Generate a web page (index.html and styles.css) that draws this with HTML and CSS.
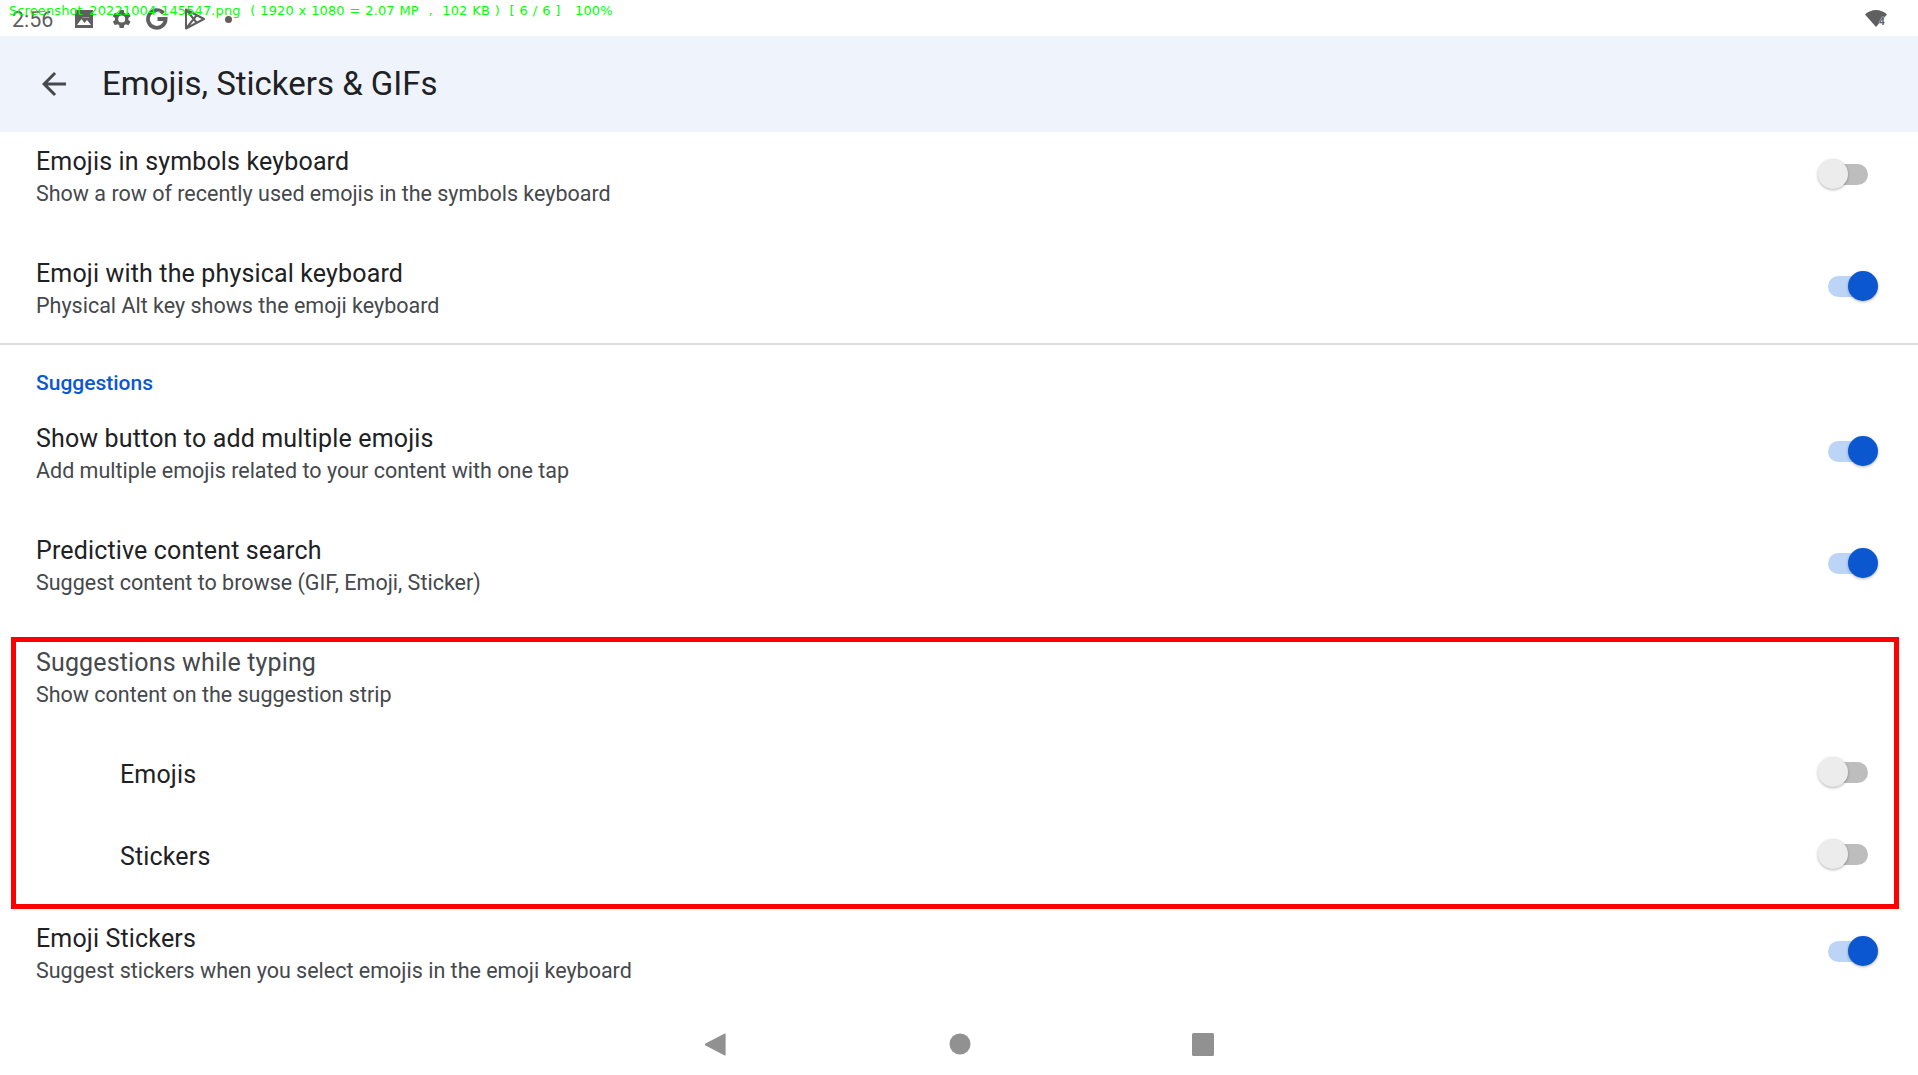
FILE: index.html
```html
<!DOCTYPE html>
<html lang="en">
<head>
<meta charset="utf-8">
<title>Emojis, Stickers &amp; GIFs</title>
<link rel="stylesheet" href="styles.css">
</head>
<body>
<div class="screen">
  <div class="viewer-caption">Screenshot_20221004-145547.png &nbsp;( 1920 x 1080 = 2.07 MP &nbsp;, &nbsp;102 KB ) &nbsp;[ 6 / 6 ] &nbsp; 100%</div>
  <header class="status-bar">
    <span class="clock">2:56</span>
    <div class="status-icons">
      <svg class="status-icon" viewBox="0 0 24 24"><path d="M3 3h18v18H3z" fill="#5f5f5f"/><path d="M5 18l4.500-6 3 4 2.500-3 4 5z" fill="#fff"/></svg>
      <svg class="status-icon" viewBox="0 0 24 24"><path fill="#5f5f5f" d="M19.400 13a7.500 7.500 0 0 0 0-2l2.200-1.700-2.100-3.600-2.600 1a7.700 7.700 0 0 0-1.700-1L14.800 3h-4.200l-.4 2.700a7.700 7.700 0 0 0-1.700 1l-2.600-1-2.100 3.600L6 11a7.500 7.500 0 0 0 0 2l-2.200 1.700 2.100 3.600 2.600-1a7.700 7.700 0 0 0 1.700 1l.4 2.700h4.200l.4-2.700a7.700 7.700 0 0 0 1.700-1l2.600 1 2.100-3.600zM12.700 15.500a3.500 3.500 0 1 1 0-7 3.500 3.500 0 0 1 0 7z"/></svg>
      <svg class="status-icon" viewBox="0 0 24 24"><path fill="none" stroke="#5f5f5f" stroke-width="3.800" d="M18.500 6.300A8.800 8.800 0 1 0 20.600 12H12.500"/></svg>
      <svg class="status-icon" viewBox="0 0 24 24"><path fill="none" stroke="#5f5f5f" stroke-width="2" stroke-linejoin="round" d="M4 2.500v19L22 12zM4 2.500l10.500 13M4 21.500l10.500-13"/></svg>
      <span class="status-dot"></span>
    </div>
    <svg class="wifi" viewBox="0 0 24 20"><path fill="#5f5f5f" d="M1 6.500C4 3.500 8 2 12 2s8 1.500 11 4.500L12 19z"/><text x="15" y="17" class="wifi-level">4</text></svg>
  </header>

  <div class="app-bar">
    <svg class="back" viewBox="0 0 24 24"><path fill="#45484c" d="M20 11H7.800l5.600-5.600L12 4l-8 8 8 8 1.400-1.400L7.800 13H20z"/></svg>
    <h1 class="app-title">Emojis, Stickers &amp; GIFs</h1>
  </div>

  <main class="list">
    <div class="row">
      <div class="row-text"><div class="row-title">Emojis in symbols keyboard</div><div class="row-sub">Show a row of recently used emojis in the symbols keyboard</div></div>
      <span class="toggle"><span class="track"></span><span class="thumb"></span></span>
    </div>
    <div class="row">
      <div class="row-text"><div class="row-title">Emoji with the physical keyboard</div><div class="row-sub">Physical Alt key shows the emoji keyboard</div></div>
      <span class="toggle on"><span class="track"></span><span class="thumb"></span></span>
    </div>
    <div class="category">Suggestions</div>
    <div class="row">
      <div class="row-text"><div class="row-title">Show button to add multiple emojis</div><div class="row-sub">Add multiple emojis related to your content with one tap</div></div>
      <span class="toggle on"><span class="track"></span><span class="thumb"></span></span>
    </div>
    <div class="row">
      <div class="row-text"><div class="row-title">Predictive content search</div><div class="row-sub">Suggest content to browse (GIF, Emoji, Sticker)</div></div>
      <span class="toggle on"><span class="track"></span><span class="thumb"></span></span>
    </div>
    <div class="row">
      <div class="row-text"><div class="row-title muted">Suggestions while typing</div><div class="row-sub">Show content on the suggestion strip</div></div>
    </div>
    <div class="row sub-row">
      <div class="row-title sub-label">Emojis</div>
      <span class="toggle"><span class="track"></span><span class="thumb"></span></span>
    </div>
    <div class="row sub-row">
      <div class="row-title sub-label">Stickers</div>
      <span class="toggle"><span class="track"></span><span class="thumb"></span></span>
    </div>
    <div class="row">
      <div class="row-text"><div class="row-title">Emoji Stickers</div><div class="row-sub">Suggest stickers when you select emojis in the emoji keyboard</div></div>
      <span class="toggle on"><span class="track"></span><span class="thumb"></span></span>
    </div>
    <div class="highlight"></div>
  </main>

  <nav class="nav-bar">
    <svg class="nav-icon" viewBox="0 0 24 24"><path fill="#919191" stroke="#919191" stroke-width="1.200" stroke-linejoin="round" d="M20 2v21L0 12.500z"/></svg>
    <svg class="nav-icon" viewBox="0 0 24 24"><circle cx="12" cy="12" r="10.500" fill="#919191"/></svg>
    <svg class="nav-icon" viewBox="0 0 24 24"><rect x="1" y="1" width="22" height="23" rx="1.500" fill="#919191"/></svg>
  </nav>
</div>
</body>
</html>
```

FILE: styles.css
```css
* { box-sizing: border-box; }
html, body { margin: 0; padding: 0; }
body { background: #fff; font-family: Roboto, "Liberation Sans", sans-serif; overflow: hidden; }
.screen { position: relative; width: 1918px; height: 1075px; display: flex; flex-direction: column; overflow: hidden; background: #fff; }

.viewer-caption { position: absolute; left: 9px; top: 3px; z-index: 5; color: #00ff00; font: 13px/15px "DejaVu Sans", sans-serif; letter-spacing: .1px; word-spacing: .6px; white-space: nowrap; }

.status-bar { height: 36px; flex: none; display: flex; align-items: center; padding: 0 30px 0 12px; color: #5f5f5f; }
.clock { font-size: 21.500px; margin-top: 2px; width: 60px; }
.status-icons { display: flex; align-items: center; gap: 12.500px; margin-top: 1px; }
.status-icon { width: 24px; height: 24px; }
.status-dot { width: 7px; height: 7px; border-radius: 50%; background: #5f5f5f; margin: 2px 0 0 7px; }
.wifi { width: 24px; height: 20px; margin-left: auto; }
.wifi-level { font: bold 10px Roboto, sans-serif; fill: #5f5f5f; stroke: #fff; stroke-width: .6px; paint-order: stroke; }

.app-bar { height: 96px; flex: none; display: flex; align-items: center; background: #eff3fb; padding-left: 36px; }
.back { width: 36px; height: 36px; flex: none; }
.app-title { margin: 0 0 0 30px; font: 400 33px/40px Roboto, sans-serif; color: #202124; }

.list { position: relative; flex: 1; min-height: 0; overflow: hidden; }
.row { height: 112px; display: flex; align-items: center; padding: 0 38px 0 36px; }
.list > .row:first-child { margin-top: -14px; }
.row-text { flex: 1; padding-top: 7px; }
.row-title { font: 400 25px/32px Roboto, sans-serif; letter-spacing: .15px; color: #202124; }
.row-title.muted { color: #45484c; }
.row-sub { font: 400 21.500px/30px Roboto, sans-serif; color: #45484c; margin-top: 1px; }
.sub-row { height: 82px; padding-left: 120px; justify-content: space-between; }
.sub-label { padding-top: 6px; }

.category { margin-top: 1px; border-top: 2px solid #dadce0; height: 52px; padding: 25px 0 0 36px; font: 500 21px/26px Roboto, sans-serif; color: #0b57d0; }

.toggle { position: relative; display: block; width: 62px; height: 36px; flex: none; margin-left: auto; }
.track { position: absolute; left: 10px; top: 8px; width: 40px; height: 21px; border-radius: 11px; background: #bdbdbd; }
.thumb { position: absolute; left: 0; top: 3px; width: 30px; height: 30px; border-radius: 50%; background: #ececec; box-shadow: 0 1px 3px rgba(0,0,0,.3); }
.toggle.on .track { background: #bcd4f5; }
.toggle.on .thumb { left: 30px; background: #0b57d0; }

.highlight { position: absolute; left: 11px; top: 505px; width: 1888px; height: 272px; border: 5px solid #ff0000; pointer-events: none; }

.nav-bar { height: 68px; flex: none; display: flex; align-items: center; justify-content: center; gap: 219px; padding: 6px 0 0 2px; }
.nav-icon { width: 24px; height: 24px; }
```
